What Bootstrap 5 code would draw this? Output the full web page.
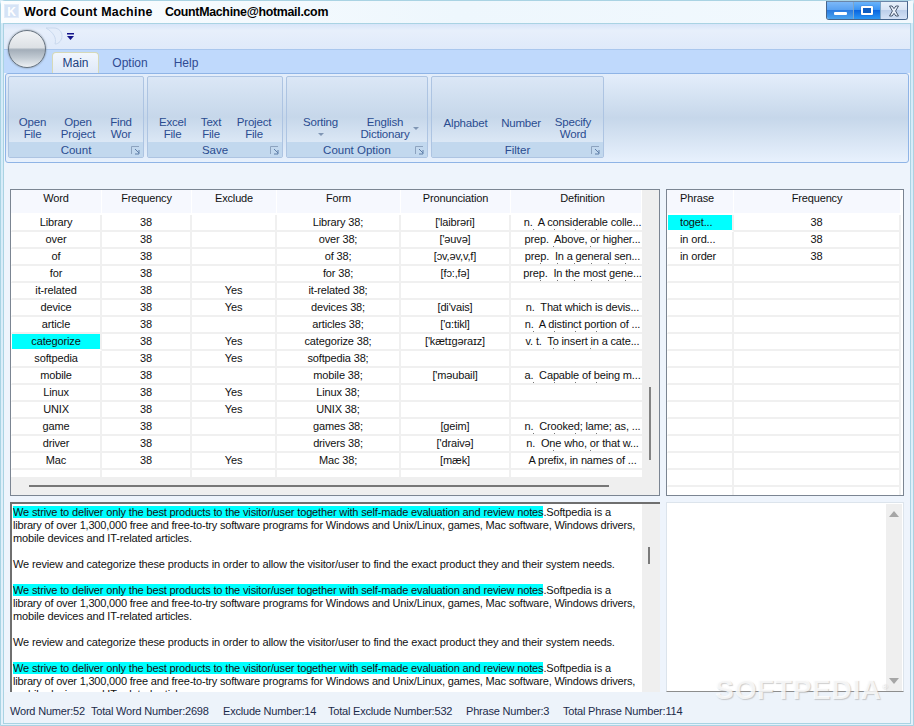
<!DOCTYPE html>
<html lang="en">
<head>
<meta charset="utf-8">
<title>Word Count Machine</title>
<link href="https://cdn.jsdelivr.net/npm/bootstrap@5.3.0/dist/css/bootstrap.min.css" rel="stylesheet">
<style>
html,body{margin:0;padding:0;background:#d8ecf7;overflow:hidden}
body{font-family:"Liberation Sans",Arial,sans-serif;font-size:11px;line-height:13px;color:#111;letter-spacing:-.15px}
.win{width:914px;height:726px;position:relative;background:linear-gradient(#d3eaf8,#e3f1fb);border:1px solid #a9d3e3;border-radius:5px 5px 0 0}
.titlebar{height:22px;background:linear-gradient(90deg,#fbfdff,#eef7fd 50%,#f2f9fe);margin:0;padding-left:3px}
.kicon{width:15px;height:14px;background:#d5e3f6;color:#fff;font-weight:bold;font-size:12px;line-height:14px;text-align:center;margin-top:3px;border:1px solid #e2ecf9}
.apptitle{font-size:12.4px;font-weight:bold;color:#000;margin-left:5px;line-height:22px;white-space:pre;letter-spacing:.28px}
.apptitle span{letter-spacing:-.3px;margin-left:1px}
.winbtns{width:82px;height:19px;margin-right:5px;border:1px solid #45638a;border-top-color:#6b86a8;border-radius:0 0 3px 3px;overflow:hidden}
.wb{flex:1 1 0;display:flex;align-items:center;justify-content:center;border-right:1px solid #7fa6c8}
.wb:last-child{border-right:0}
.wb-min{background:linear-gradient(#7cb8f8 0,#5aa2f2 45%,#2a7be0 50%,#4aa4f0 100%)}
.wb-max{background:linear-gradient(#6ab4fb 0,#3a94f5 45%,#0a66e0 50%,#2a96f5 100%)}
.wb-cls{background:linear-gradient(#e8f0fa 0,#d8e4f4 45%,#bccfea 50%,#d4e2f6 100%)}
.glyph-min{width:13px;height:3px;background:#fff;margin-top:6px;border-radius:1px}
.glyph-max{width:12px;height:9px;background:#0f5dc0;border:2px solid #fff;border-radius:1px;box-shadow:0 0 1px #0a3a80}
.client{margin:0 2px;height:701px;background:#eef4fc;border:1px solid #a9d3e3;position:relative}
.qat{height:26px;background:linear-gradient(#d7e5f9 0,#e7effb 25%,#dfeafa 100%);border-bottom:1px solid #a9c7ee}
.orb{position:absolute;left:4px;top:6px;width:38px;height:38px;border-radius:50%;border:1px solid #66727e;background:linear-gradient(#f2f4f6 0,#dde1e5 46%,#a3aeb9 52%,#c2cbd3 75%,#eef1f4 100%);box-shadow:0 0 2px #6f7c88}
.qatshape{margin-left:41px;margin-top:3px;display:block}
.qatdrop{margin-left:2px;margin-top:9px}
.tabband{height:23px;background:#bfd9fc;padding-left:48px;letter-spacing:0;font-size:12px}
.rtab{height:22px;line-height:27px;color:#2f4a92;text-align:center;display:block}
.rtab.active{width:47px;height:21px;margin-top:2px;background:linear-gradient(#f1f6fd,#dfe9f8);border:1px solid #d6d9b8;border-bottom:0;border-radius:4px 4px 0 0;color:#20407e;line-height:21px}
.rtab.t2{width:62px}
.rtab.t3{width:50px}
.ribbonpanel{height:90px;margin:0 1px;background:linear-gradient(#e4eefb 0,#c6d7ea 50%,#e8f1fd 100%);border:1px solid #8fb4e6;border-radius:3px;padding:2px 2px;gap:3px;letter-spacing:0;font-size:11.5px}
.rgroup{height:82px;border:1px solid #adc4e2;border-radius:2px;background:linear-gradient(#dbe7f6 0,#c6d7ea 50%,#e8f1fc 100%);display:flex;flex-direction:column}
.g1,.g2{width:136px}
.g3{width:142px}
.g4{width:173px}
.rbtns{flex:1 1 auto;display:grid;align-items:end;padding-bottom:2px;text-align:center;color:#2a4c90;line-height:12px;letter-spacing:-.2px}
.g1 .rbtns{grid-template-columns:47px 44px 42px}
.g2 .rbtns{grid-template-columns:49px 28px 58px}
.g3 .rbtns{grid-template-columns:67px 62px}
.g4 .rbtns{grid-template-columns:67px 44px 60px}
.rfoot{height:15px;background:#c2d8ee;text-align:center;color:#2a4c90;line-height:16px;position:relative}
.launch{position:absolute;right:2px;top:4px}
.caret-dn{display:block;margin:5px auto 4px;width:0;height:0;border:3px solid transparent;border-top:3px solid #8096b4;border-bottom:0}
.caret-side{position:absolute;right:-8px;top:11px;width:0;height:0;border:3px solid transparent;border-top:3px solid #8096b4;border-bottom:0}
.rb{position:relative;display:block}
.rb.one{padding-bottom:11px}
.dict{display:block;position:relative;width:52px;margin:0 auto}
.work{padding:26px 6px 0 6px;gap:6px}
.panes{gap:6px}
.gridpane{width:650px;height:307px;border:1px solid #7b8592;background:#efefef}
.gridpane2{width:238px;height:307px;border:1px solid #7b8592;background:#fff;overflow:hidden}
.gridscroll{width:631px;height:287px;overflow:hidden;background:#fff}
.vtrack{width:17px;background:#efefef}
.vthumb{width:2px;height:73px;margin:197px 0 0 7px;background:#838383}
.htrack{height:18px}
.hthumb{height:2px;width:580px;margin:8px 0 0 18px;background:#777}
table.wgrid{table-layout:fixed;width:100%;margin:0;--bs-table-bg:transparent;--bs-table-border-color:#f0f0f0;border-collapse:separate;border-spacing:0;font-size:11px;color:#111}
table.wgrid.narrow{width:234px}
table.wgrid th{height:25px;padding:1px 0 0;font-weight:normal;text-align:center;vertical-align:top;line-height:15px;background:linear-gradient(#f6f8fe 23px,#fff 23px);border:0;border-right:1px solid #fff;border-bottom:0}
table.wgrid td{height:17px;padding:0;text-align:center;vertical-align:top;border:0;border-right:2px solid #f0f0f0;border-bottom:2px solid #f0f0f0;overflow:hidden;white-space:nowrap}
table.wgrid td:first-child{border-left:1px solid #fff}
table.wgrid td>div{height:15px;overflow:hidden;line-height:15px;position:relative}
table.main th:last-child{padding-left:13px}
table.main td:last-child{padding-left:12px;border-right:0}
table.wgrid td.hit{background:#00ffff;border-bottom-color:#fff}
.peek{position:absolute;bottom:0;height:1px;left:0;right:0;background-repeat:repeat-x;background-image:linear-gradient(90deg,#777 1px,transparent 1px)}
.p1{background-size:21px 1px;background-position:52px 0;right:30px}
.p2{background-size:37px 1px;background-position:30px 0;right:40px}
.p3{background-size:17px 1px;background-position:24px 0;left:10px;right:10px}
.col1{width:91px}.col2{width:90px}.col3{width:85px}.col4{width:124px}.col5{width:110px}
.pcol1{width:67px}
.pth1{padding-right:6px!important}
.hit{background:#00ffff}
.ph{text-align:left!important;padding-left:12px!important}
.textpane{width:650px;height:190px;background:#fff;border-top:2px solid #6f6f6f;border-left:2px solid #6f6f6f;overflow:hidden}
.textbody{width:630px;padding:1.5px 0 0 1px;line-height:13.07px;white-space:nowrap;color:#111;overflow:hidden}
.textbody p{margin:0 0 13.07px}
.lib{letter-spacing:-.19px}
.textpane .vtrack{width:18px}
.tthumb{width:2px;height:17px;margin:43px 0 0 6px;background:#7a7a7a}
.memo{width:238px;height:190px;background:#fff;border:1px solid #dce4ec;border-bottom:1px solid #8d8d8d;padding:1px 1px 0 0}
.memotrack{width:16px;background:#efefef;padding:7px 0}
.arrow-up{width:0;height:0;border:5px solid transparent;border-bottom:6px solid #a6a6a6;border-top:0;margin:0 auto}
.arrow-dn{width:0;height:0;border:5px solid transparent;border-top:6px solid #a6a6a6;border-bottom:0;margin:0 auto}
.status{height:31px;padding-left:6px;align-items:center;background:#edf3fa;color:#1c2b4a;white-space:nowrap;line-height:15px;padding-top:7px;letter-spacing:-.2px}
.s1{width:81px}.s2{width:132px}.s3{width:105px}.s4{width:138px}.s5{width:97px}
.wm{position:absolute;left:714px;top:675px;font-size:28px;line-height:28px;font-weight:bold;color:rgba(255,255,255,.8);text-shadow:1px 1px 1px rgba(165,165,165,.55);letter-spacing:.7px;white-space:nowrap}
.wm sup{font-size:8px;top:-1.2em}
</style>
</head>
<body>
<div class="win d-flex flex-column">
  <div class="titlebar d-flex">
    <div class="kicon">K</div>
    <div class="apptitle">Word Count Machine   <span>CountMachine@hotmail.com</span></div>
    <div class="winbtns d-flex ms-auto">
      <div class="wb wb-min"><span class="glyph-min"></span></div>
      <div class="wb wb-max"><span class="glyph-max"></span></div>
      <div class="wb wb-cls"><svg width="12" height="12" viewBox="0 0 12 12"><path d="M1.5 1h2.6L6 3.6 7.9 1h2.6L7.6 6l2.9 5H7.9L6 8.4 4.1 11H1.5l2.9-5z" fill="#e8eef8" stroke="#4a5a70"/></svg></div>
    </div>
  </div>
  <div class="client d-flex flex-column">
    <div class="orb"></div>
    <div class="qat d-flex">
      <svg class="qatshape" width="20" height="19" viewBox="0 0 20 19"><path d="M1 1h8c5 0 8 4 8 8s-3 8-7 8c2-6-2-12-9-16z" fill="#e4edfa" stroke="#c9d9ee"/></svg>
      <svg class="qatdrop" width="7" height="7" viewBox="0 0 7 7"><rect x="0" y="0" width="7" height="1.5" fill="#14148a"/><path d="M0 3h7L3.5 7z" fill="#14148a"/></svg>
    </div>
    <div class="tabband d-flex">
      <span class="rtab active">Main</span>
      <span class="rtab t2">Option</span>
      <span class="rtab t3">Help</span>
    </div>
    <div class="ribbonpanel d-flex">
      <div class="rgroup g1">
        <div class="rbtns"><span class="rb">Open<br>File</span><span class="rb">Open<br>Project</span><span class="rb">Find<br>Wor</span></div>
        <div class="rfoot">Count<svg class="launch" width="10" height="9" viewBox="0 0 10 9"><path d="M.5 8V.5H8" fill="none" stroke="#8da3bf"/><path d="M4 3l4 4M8 4v4H4" fill="none" stroke="#5f7ea8"/></svg></div>
      </div>
      <div class="rgroup g2">
        <div class="rbtns"><span class="rb">Excel<br>File</span><span class="rb">Text<br>File</span><span class="rb">Project<br>File</span></div>
        <div class="rfoot">Save<svg class="launch" width="10" height="9" viewBox="0 0 10 9"><path d="M.5 8V.5H8" fill="none" stroke="#8da3bf"/><path d="M4 3l4 4M8 4v4H4" fill="none" stroke="#5f7ea8"/></svg></div>
      </div>
      <div class="rgroup g3">
        <div class="rbtns"><span class="rb">Sorting<i class="caret-dn"></i></span><span class="rb"><span class="dict">English<br>Dictionary<i class="caret-side"></i></span></span></div>
        <div class="rfoot">Count Option<svg class="launch" width="10" height="9" viewBox="0 0 10 9"><path d="M.5 8V.5H8" fill="none" stroke="#8da3bf"/><path d="M4 3l4 4M8 4v4H4" fill="none" stroke="#5f7ea8"/></svg></div>
      </div>
      <div class="rgroup g4">
        <div class="rbtns"><span class="rb one">Alphabet</span><span class="rb one">Number</span><span class="rb">Specify<br>Word</span></div>
        <div class="rfoot">Filter<svg class="launch" width="10" height="9" viewBox="0 0 10 9"><path d="M.5 8V.5H8" fill="none" stroke="#8da3bf"/><path d="M4 3l4 4M8 4v4H4" fill="none" stroke="#5f7ea8"/></svg></div>
      </div>
    </div>
    <div class="work d-flex flex-column">
      <div class="panes d-flex">
        <div class="gridpane d-flex flex-column">
          <div class="d-flex">
            <div class="gridscroll">
              <table class="table wgrid main">
                <colgroup><col class="col1"><col class="col2"><col class="col3"><col class="col4"><col class="col5"><col></colgroup>
                <thead><tr><th>Word</th><th>Frequency</th><th>Exclude</th><th>Form</th><th>Pronunciation</th><th>Definition</th></tr></thead>
                <tbody>
                <tr><td><div>Library</div></td><td><div>38</div></td><td><div></div></td><td><div>Library 38;</div></td><td><div>['laibrəri]</div></td><td><div>n.&nbsp; A considerable colle...<i class="peek p1"></i></div></td></tr>
                <tr><td><div>over</div></td><td><div>38</div></td><td><div></div></td><td><div>over 38;</div></td><td><div>['əuvə]</div></td><td><div>prep.&nbsp; Above, or higher...<i class="peek p2"></i></div></td></tr>
                <tr><td><div>of</div></td><td><div>38</div></td><td><div></div></td><td><div>of 38;</div></td><td><div>[ɔv,əv,v,f]</div></td><td><div>prep.&nbsp; In a general sen...<i class="peek p3"></i></div></td></tr>
                <tr><td><div>for</div></td><td><div>38</div></td><td><div></div></td><td><div>for 38;</div></td><td><div>[fɔ:,fə]</div></td><td><div>prep.&nbsp; In the most gene...<i class="peek p3"></i></div></td></tr>
                <tr><td><div>it-related</div></td><td><div>38</div></td><td><div>Yes</div></td><td><div>it-related 38;</div></td><td><div></div></td><td><div></div></td></tr>
                <tr><td><div>device</div></td><td><div>38</div></td><td><div>Yes</div></td><td><div>devices 38;</div></td><td><div>[di'vais]</div></td><td><div>n.&nbsp; That which is devis...</div></td></tr>
                <tr><td><div>article</div></td><td><div>38</div></td><td><div></div></td><td><div>articles 38;</div></td><td><div>['ɑ:tikl]</div></td><td><div>n.&nbsp; A distinct portion of ...<i class="peek p1"></i></div></td></tr>
                <tr><td class="hit"><div>categorize</div></td><td><div>38</div></td><td><div>Yes</div></td><td><div>categorize 38;</div></td><td><div>['kætɪgəraɪz]</div></td><td><div>v. t.&nbsp; To insert in a cate...<i class="peek p2"></i></div></td></tr>
                <tr><td><div>softpedia</div></td><td><div>38</div></td><td><div>Yes</div></td><td><div>softpedia 38;</div></td><td><div></div></td><td><div></div></td></tr>
                <tr><td><div>mobile</div></td><td><div>38</div></td><td><div></div></td><td><div>mobile 38;</div></td><td><div>['məubail]</div></td><td><div>a.&nbsp; Capable of being m...<i class="peek p1"></i></div></td></tr>
                <tr><td><div>Linux</div></td><td><div>38</div></td><td><div>Yes</div></td><td><div>Linux 38;</div></td><td><div></div></td><td><div></div></td></tr>
                <tr><td><div>UNIX</div></td><td><div>38</div></td><td><div>Yes</div></td><td><div>UNIX 38;</div></td><td><div></div></td><td><div></div></td></tr>
                <tr><td><div>game</div></td><td><div>38</div></td><td><div></div></td><td><div>games 38;</div></td><td><div>[geim]</div></td><td><div>n.&nbsp; Crooked; lame; as, ...<i class="peek p1"></i></div></td></tr>
                <tr><td><div>driver</div></td><td><div>38</div></td><td><div></div></td><td><div>drivers 38;</div></td><td><div>['draivə]</div></td><td><div>n.&nbsp; One who, or that w...<i class="peek p2"></i></div></td></tr>
                <tr><td><div>Mac</div></td><td><div>38</div></td><td><div>Yes</div></td><td><div>Mac 38;</div></td><td><div>[mæk]</div></td><td><div>A prefix, in names of ...</div></td></tr>
                <tr><td><div></div></td><td><div></div></td><td><div></div></td><td><div></div></td><td><div></div></td><td><div></div></td></tr>
                </tbody>
              </table>
            </div>
            <div class="vtrack"><div class="vthumb"></div></div>
          </div>
          <div class="htrack"><div class="hthumb"></div></div>
        </div>
        <div class="gridpane2">
          <table class="table wgrid narrow">
            <colgroup><col class="pcol1"><col></colgroup>
            <thead><tr><th class="pth1">Phrase</th><th>Frequency</th></tr></thead>
            <tbody>
            <tr><td class="hit ph"><div>toget...</div></td><td><div>38</div></td></tr>
            <tr><td class="ph"><div>in ord...</div></td><td><div>38</div></td></tr>
            <tr><td class="ph"><div>in order</div></td><td><div>38</div></td></tr>
            <tr><td><div></div></td><td><div></div></td></tr>
            <tr><td><div></div></td><td><div></div></td></tr>
            <tr><td><div></div></td><td><div></div></td></tr>
            <tr><td><div></div></td><td><div></div></td></tr>
            <tr><td><div></div></td><td><div></div></td></tr>
            <tr><td><div></div></td><td><div></div></td></tr>
            <tr><td><div></div></td><td><div></div></td></tr>
            <tr><td><div></div></td><td><div></div></td></tr>
            <tr><td><div></div></td><td><div></div></td></tr>
            <tr><td><div></div></td><td><div></div></td></tr>
            <tr><td><div></div></td><td><div></div></td></tr>
            <tr><td><div></div></td><td><div></div></td></tr>
            <tr><td><div></div></td><td><div></div></td></tr>
            <tr><td><div></div></td><td><div></div></td></tr>
            </tbody>
          </table>
        </div>
      </div>
      <div class="panes d-flex">
        <div class="textpane d-flex">
          <div class="textbody flex-grow-1">
            <p><span class="hit">We strive to deliver only the best products to the visitor/user together with self-made evaluation and review notes</span>.Softpedia is a<br><span class="lib">library of over 1,300,000 free and free-to-try software programs for Windows and Unix/Linux, games, Mac software, Windows drivers,</span><br>mobile devices and IT-related articles.</p>
            <p>We review and categorize these products in order to allow the visitor/user to find the exact product they and their system needs.</p>
            <p><span class="hit">We strive to deliver only the best products to the visitor/user together with self-made evaluation and review notes</span>.Softpedia is a<br><span class="lib">library of over 1,300,000 free and free-to-try software programs for Windows and Unix/Linux, games, Mac software, Windows drivers,</span><br>mobile devices and IT-related articles.</p>
            <p>We review and categorize these products in order to allow the visitor/user to find the exact product they and their system needs.</p>
            <p><span class="hit">We strive to deliver only the best products to the visitor/user together with self-made evaluation and review notes</span>.Softpedia is a<br><span class="lib">library of over 1,300,000 free and free-to-try software programs for Windows and Unix/Linux, games, Mac software, Windows drivers,</span><br>mobile devices and IT-related articles.</p>
          </div>
          <div class="vtrack"><div class="tthumb"></div></div>
        </div>
        <div class="memo d-flex justify-content-end">
          <div class="memotrack d-flex flex-column justify-content-between"><div class="arrow-up"></div><div class="arrow-dn"></div></div>
        </div>
      </div>
    </div>
    <div class="status d-flex">
      <span class="s1">Word Numer:52</span><span class="s2">Total Word Number:2698</span><span class="s3">Exclude Number:14</span><span class="s4">Total Exclude Number:532</span><span class="s5">Phrase Number:3</span><span>Total Phrase Number:114</span>
    </div>
  </div>
  <div class="wm">SOFTPEDIA<sup>®</sup></div>
</div>
<script src="https://cdn.jsdelivr.net/npm/bootstrap@5.3.0/dist/js/bootstrap.bundle.min.js"></script>
</body>
</html>
